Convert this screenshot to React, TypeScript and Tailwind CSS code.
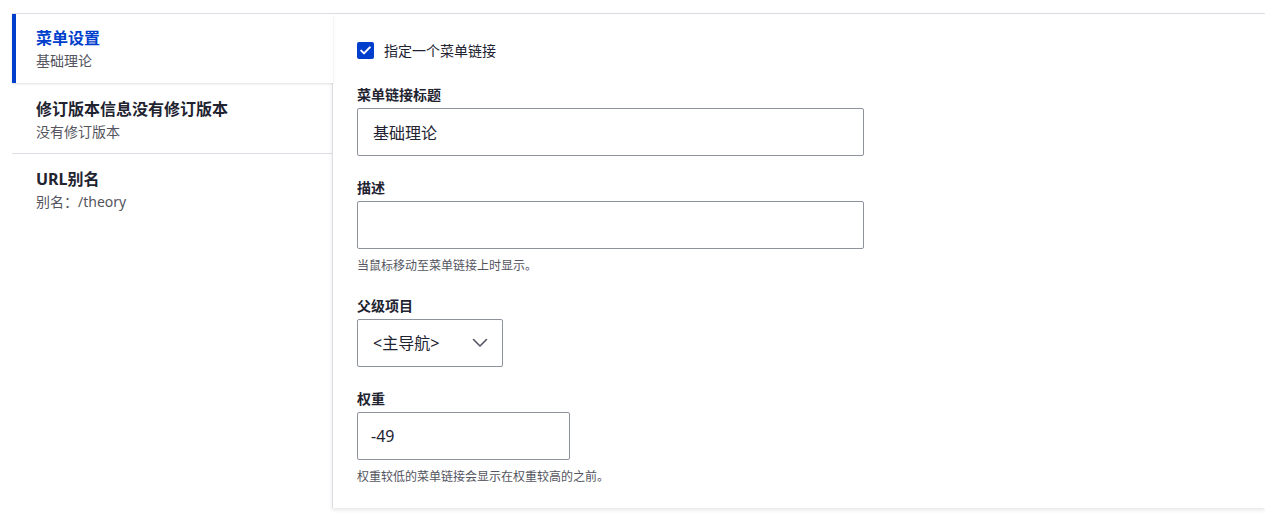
import React, { useState } from 'react';

const font = { fontFamily: '"Noto Sans", "Noto Sans CJK SC", sans-serif' };

interface Tab {
  id: string;
  title: string;
  summary: string;
}

const tabs: Tab[] = [
  { id: 'menu', title: '菜单设置', summary: '基础理论' },
  { id: 'revision', title: '修订版本信息没有修订版本', summary: '没有修订版本' },
  { id: 'path', title: 'URL别名', summary: '别名：/theory' },
];

const Label: React.FC<{ children: React.ReactNode }> = ({ children }) => (
  <div className="text-[14px] leading-[20px] font-bold text-[#222330] mb-[3px]">{children}</div>
);

const Help: React.FC<{ children: React.ReactNode }> = ({ children }) => (
  <div className="mt-[9px] text-[12px] leading-[16px] text-[#545560]">{children}</div>
);

const App: React.FC = () => {
  const [active, setActive] = useState('menu');
  const [checked, setChecked] = useState(true);

  return (
    <div style={font} className="w-[1265px] h-[516px] bg-white pt-[13px] pl-3 text-[#222330]">
      <div className="flex border-t border-[#dedfe4]">
        {/* Tabs menu */}
        <ul className="w-[320px] shrink-0">
          {tabs.map((tab, i) => {
            const isActive = tab.id === active;
            return (
              <li
                key={tab.id}
                onClick={() => setActive(tab.id)}
                className={
                  isActive
                    ? 'relative z-10 w-[321px] h-[69px] bg-white border-l-4 border-[#003ecc] pl-[20px] pt-[14px] shadow-[0_1px_2px_rgba(0,0,0,0.12)] cursor-pointer'
                    : i === 1
                      ? 'h-[71px] border-b border-[#dedfe4] pl-[24px] pt-[16px] cursor-pointer'
                      : 'h-[70px] pl-[24px] pt-[15px] cursor-pointer'
                }
              >
                <div
                  className={`text-[16px] leading-[20px] font-bold ${isActive ? 'text-[#003ecc]' : 'text-[#222330]'}`}
                >
                  {tab.title}
                </div>
                <div className="mt-[3px] text-[14px] leading-[20px] text-[#545560]">{tab.summary}</div>
              </li>
            );
          })}
        </ul>

        {/* Pane */}
        <div className="flex-1 h-[494px] border-l border-[#dedfe4] shadow-[0_2px_4px_rgba(0,0,0,0.1)] pl-6 pt-[26px]">
          <label className="flex items-center h-[20px] cursor-pointer">
            <span
              onClick={() => setChecked(!checked)}
              className={`w-[17px] h-[17px] rounded-[2px] flex items-center justify-center ${checked ? 'bg-[#003ecc]' : 'border border-[#8e929c]'}`}
            >
              {checked && (
                <svg width="11" height="9" viewBox="0 0 11 9" fill="none">
                  <path d="M1.2 4.6l2.8 2.8 5.8-6" stroke="white" strokeWidth="2" strokeLinecap="round" strokeLinejoin="round" />
                </svg>
              )}
            </span>
            <span className="ml-[10px] text-[14px] text-[#222330]">指定一个菜单链接</span>
          </label>

          <div className="mt-[25px]">
            <Label>菜单链接标题</Label>
            <input
              defaultValue="基础理论"
              className="w-[507px] h-[48px] border border-[#8e929c] rounded-[2px] px-[15px] text-[16px] text-[#222330] outline-none"
            />
          </div>

          <div className="mt-[22px]">
            <Label>描述</Label>
            <input className="w-[507px] h-[48px] border border-[#8e929c] rounded-[2px] px-[15px] text-[16px] outline-none" />
            <Help>当鼠标移动至菜单链接上时显示。</Help>
          </div>

          <div className="mt-[22px]">
            <Label>父级项目</Label>
            <div className="w-[146px] h-[48px] border border-[#8e929c] rounded-[2px] pl-[15px] pr-[14px] flex items-center justify-between">
              <span className="text-[16px] text-[#222330]">&lt;主导航&gt;</span>
              <svg width="16" height="10" viewBox="0 0 16 10" fill="none">
                <path d="M1.5 1.5l6.5 6.5 6.5-6.5" stroke="#545560" strokeWidth="1.6" strokeLinecap="round" strokeLinejoin="round" />
              </svg>
            </div>
          </div>

          <div className="mt-[22px]">
            <Label>权重</Label>
            <input
              defaultValue="-49"
              className="w-[213px] h-[48px] border border-[#8e929c] rounded-[2px] px-[13px] text-[16px] text-[#222330] outline-none"
            />
            <Help>权重较低的菜单链接会显示在权重较高的之前。</Help>
          </div>
        </div>
      </div>
    </div>
  );
};

export default App;
